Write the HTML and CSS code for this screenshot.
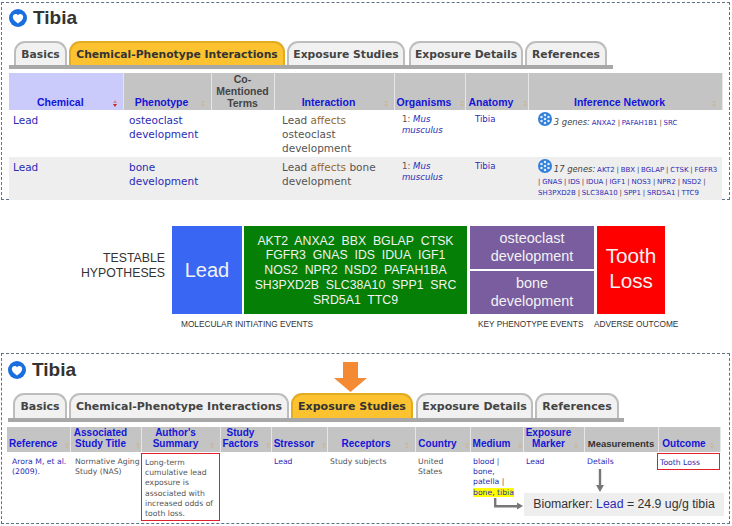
FILE: index.html
```html
<!DOCTYPE html>
<html lang="en">
<head>
    <meta charset="UTF-8">
    <title>Tibia - testable hypotheses</title>
    <link rel="stylesheet" href="styles.css">
</head>
<body>

    <!-- top panel: phenotype interactions -->
    <section class="panel panel-top">
        <h1 class="title">
            <svg class="heart" viewBox="0 0 18 18"><circle cx="9" cy="9" r="9" fill="#1a6fe0"/><path d="M9 14.6 C5.6 12.2 3.8 10.2 3.8 7.8 C3.8 5 7.4 3.8 9 6.2 C10.6 3.8 14.2 5 14.2 7.8 C14.2 10.2 12.4 12.2 9 14.6 Z" fill="#fff"/></svg>
            Tibia
        </h1>
        <div class="tabs">
            <div class="tab tab-basics">Basics</div>
            <div class="tab tab-chem on">Chemical-Phenotype Interactions</div>
            <div class="tab tab-studies">Exposure Studies</div>
            <div class="tab tab-details">Exposure Details</div>
            <div class="tab tab-refs">References</div>
        </div>
        <table class="data">
            <colgroup>
                <col style="width:114px"><col style="width:88px"><col style="width:63px"><col style="width:120px"><col style="width:71px"><col style="width:63px"><col style="width:194px">
            </colgroup>
            <tr>
                <th class="active"><a>Chemical</a><i class="sort red"></i></th>
                <th><a>Phenotype</a><i class="sort"></i></th>
                <th class="plain">Co-<br>Mentioned<br>Terms</th>
                <th><a>Interaction</a><i class="sort"></i></th>
                <th><a>Organisms</a><i class="sort tight"></i></th>
                <th><a>Anatomy</a><i class="sort tight"></i></th>
                <th><a>Inference Network</a><i class="sort"></i></th>
            </tr>
            <tr>
                <td><a>Lead</a></td>
                <td><a>osteoclast development</a></td>
                <td></td>
                <td>Lead <span class="verb">affects</span> osteoclast development</td>
                <td class="small">1: <a><em>Mus musculus</em></a></td>
                <td class="small"><a>Tibia</a></td>
                <td class="net">
                    <svg class="net-icon" viewBox="0 0 14 14"><circle cx="7" cy="7" r="7" fill="#2f7fd8"/><g fill="#dbe9fa"><circle cx="7" cy="7" r="1.3"/><circle cx="7" cy="3" r="1.3"/><circle cx="7" cy="11" r="1.3"/><circle cx="3.5" cy="5" r="1.3"/><circle cx="10.5" cy="5" r="1.3"/><circle cx="3.5" cy="9" r="1.3"/><circle cx="10.5" cy="9" r="1.3"/></g></svg>
                    <em class="count">3 genes:</em> <a>ANXA2</a> | <a>PAFAH1B1</a> | <a>SRC</a>
                </td>
            </tr>
            <tr class="alt">
                <td><a>Lead</a></td>
                <td><a>bone development</a></td>
                <td></td>
                <td>Lead <span class="verb">affects</span> bone development</td>
                <td class="small">1: <a><em>Mus musculus</em></a></td>
                <td class="small"><a>Tibia</a></td>
                <td class="net">
                    <svg class="net-icon" viewBox="0 0 14 14"><circle cx="7" cy="7" r="7" fill="#2f7fd8"/><g fill="#dbe9fa"><circle cx="7" cy="7" r="1.3"/><circle cx="7" cy="3" r="1.3"/><circle cx="7" cy="11" r="1.3"/><circle cx="3.5" cy="5" r="1.3"/><circle cx="10.5" cy="5" r="1.3"/><circle cx="3.5" cy="9" r="1.3"/><circle cx="10.5" cy="9" r="1.3"/></g></svg>
                    <em class="count">17 genes:</em> <a>AKT2</a> | <a>BBX</a> | <a>BGLAP</a> | <a>CTSK</a> | <a>FGFR3</a> | <a>GNAS</a> | <a>IDS</a> | <a>IDUA</a> | <a>IGF1</a> | <a>NOS3</a> | <a>NPR2</a> | <a>NSD2</a> | <a>SH3PXD2B</a> | <a>SLC38A10</a> | <a>SPP1</a> | <a>SRD5A1</a> | <a>TTC9</a>
                </td>
            </tr>
        </table>
    </section>

    <!-- middle diagram -->
    <section class="pathway">
        <div class="label">TESTABLE<br>HYPOTHESES</div>
        <div class="col col-lead">
            <div class="box lead">Lead</div>
            <div class="caption">MOLECULAR INITIATING EVENTS</div>
        </div>
        <div class="col col-genes">
            <div class="box genes">AKT2&nbsp; ANXA2&nbsp; BBX&nbsp; BGLAP&nbsp; CTSK<br>FGFR3&nbsp; GNAS&nbsp; IDS&nbsp; IDUA&nbsp; IGF1<br>NOS2&nbsp; NPR2&nbsp; NSD2&nbsp; PAFAH1BA<br>SH3PXD2B&nbsp; SLC38A10&nbsp; SPP1&nbsp; SRC<br>SRD5A1&nbsp; TTC9</div>
        </div>
        <div class="col col-pheno">
            <div class="pheno-stack">
                <div class="box pheno">osteoclast<br>development</div>
                <div class="box pheno">bone<br>development</div>
            </div>
            <div class="caption">KEY PHENOTYPE EVENTS</div>
        </div>
        <div class="col col-loss">
            <div class="box loss">Tooth<br>Loss</div>
            <div class="caption">ADVERSE OUTCOME</div>
        </div>
    </section>

    <!-- bottom panel: exposure studies -->
    <section class="panel panel-bottom">
        <h1 class="title">
            <svg class="heart" viewBox="0 0 18 18"><circle cx="9" cy="9" r="9" fill="#1a6fe0"/><path d="M9 14.6 C5.6 12.2 3.8 10.2 3.8 7.8 C3.8 5 7.4 3.8 9 6.2 C10.6 3.8 14.2 5 14.2 7.8 C14.2 10.2 12.4 12.2 9 14.6 Z" fill="#fff"/></svg>
            Tibia
        </h1>
        <div class="tabs">
            <div class="tab tab-basics">Basics</div>
            <div class="tab tab-chem">Chemical-Phenotype Interactions</div>
            <div class="tab tab-studies on">Exposure Studies</div>
            <div class="tab tab-details">Exposure Details</div>
            <div class="tab tab-refs">References</div>
        </div>
        <table class="data data-studies">
            <colgroup>
                <col style="width:63px"><col style="width:71px"><col style="width:79px"><col style="width:51px"><col style="width:56px"><col style="width:88px"><col style="width:55px"><col style="width:53px"><col style="width:61px"><col style="width:74px"><col style="width:62px">
            </colgroup>
            <tr>
                <th><a>Reference</a><i class="sort tight"></i></th>
                <th><a>Associated<br>Study Title</a><i class="sort tight"></i></th>
                <th><a>Author's<br>Summary</a><i class="sort"></i></th>
                <th><a>Study<br>Factors</a><i class="sort tight"></i></th>
                <th><a>Stressor</a><i class="sort tight"></i></th>
                <th><a>Receptors</a><i class="sort"></i></th>
                <th><a>Country</a><i class="sort tight"></i></th>
                <th><a>Medium</a><i class="sort tight"></i></th>
                <th><a>Exposure<br>Marker</a><i class="sort"></i></th>
                <th class="plain">Measurements</th>
                <th><a>Outcome</a><i class="sort"></i></th>
            </tr>
            <tr>
                <td class="pad-5"><a>Arora M, et al. (2009).</a></td>
                <td class="pad-5">Normative Aging Study (NAS)</td>
                <td class="flush"><div class="boxed boxed-summary">Long-term cumulative lead exposure is associated with increased odds of tooth loss.</div></td>
                <td></td>
                <td><a>Lead</a></td>
                <td>Study subjects</td>
                <td>United States</td>
                <td><a>blood</a> | <a>bone, patella</a> | <mark><a>bone, tibia</a></mark></td>
                <td><a>Lead</a></td>
                <td><a>Details</a></td>
                <td class="flush"><div class="boxed boxed-outcome"><a>Tooth Loss</a></div></td>
            </tr>
        </table>

        <svg class="orange-arrow" viewBox="0 0 33 30"><path d="M9 0H24V16H33L16.5 30L0 16H9Z" fill="#f58a35"/></svg>
        <svg class="arrow-down" viewBox="0 0 8 23"><path d="M2.8 0H5.2V16H8L4 23L0 16H2.8Z" fill="#777"/></svg>
        <svg class="arrow-right" viewBox="0 0 29 13"><path d="M0 0H2.4V7H23V4.5L29 8L23 11.5V9.4H0Z" fill="#777"/></svg>
        <div class="biomarker">Biomarker: <a>Lead</a> = 24.9 ug/g tibia</div>
    </section>

</body>
</html>
```

FILE: styles.css
```css
body {
    font-family: "Liberation Sans", Arial, sans-serif;
    background-color: #fff;
    margin: 0;
    padding: 0;
    color: #555;
}

a {
    color: #2b2bb5;
}

.panel {
    position: relative;
    box-sizing: border-box;
    width: 729px;
    margin-left: 1px;
    border: 1px dashed #5f7186;
}

.panel-top {
    height: 198px;
    margin-top: 2px;
    padding: 4px 0 0 7px;
}

.panel-bottom {
    height: 171px;
    margin-top: 14px;
    padding: 5px 0 0 5px;
}

.title {
    display: flex;
    align-items: center;
    gap: 6px;
    height: 22px;
    margin: 0;
    font-size: 19px;
    font-weight: bold;
    color: #333;
}

.heart {
    width: 18px;
    height: 18px;
}

.panel-bottom .heart {
    margin-left: 1px;
}

/* tabs */
.tabs {
    display: flex;
    gap: 2px;
    box-sizing: border-box;
    height: 28px;
    margin-top: 12px;
    padding-left: 5px;
    border-bottom: 4px solid #a8a8a8;
    font-family: "DejaVu Sans", Verdana, sans-serif;
    font-size: 10.75px;
    font-weight: bold;
}

.panel-top .tabs {
    width: 604px;
}

.panel-bottom .tabs {
    width: 616px;
    height: 29px;
    margin-left: 1px;
    font-size: 11px;
}

.tab {
    box-sizing: border-box;
    height: 24px;
    line-height: 23px;
    text-align: center;
    white-space: nowrap;
    background-color: #f1f1f1;
    border: 2px solid #bdbdbd;
    border-bottom: none;
    border-radius: 11px 11px 0 0;
    color: #444;
}

.panel-bottom .tab {
    height: 25px;
}

.tab.on {
    background-color: #fcc22f;
    border-color: #e2ab25;
    color: #333;
}

.panel-top .tab-basics { width: 53px; }
.panel-top .tab-chem { width: 216px; }
.panel-top .tab-studies { width: 118px; margin-right: 2px; }
.panel-top .tab-details { width: 114px; }
.panel-top .tab-refs { width: 82px; }

.panel-bottom .tab-basics { width: 54px; }
.panel-bottom .tab-chem { width: 220px; }
.panel-bottom .tab-studies { width: 122px; margin-right: 1px; }
.panel-bottom .tab-details { width: 117px; }
.panel-bottom .tab-refs { width: 84px; }

/* tables */
.data {
    table-layout: fixed;
    width: 713px;
    margin-top: 4px;
    border-collapse: collapse;
    font-family: "DejaVu Sans", Verdana, sans-serif;
    font-size: 10.5px;
    line-height: 14px;
}

.data th {
    position: relative;
    box-sizing: border-box;
    height: 37px;
    padding: 0 11px 2px 0;
    vertical-align: bottom;
    background-color: #c4c4c4;
    border-right: 1px solid #e6e6e6;
    font-family: "Liberation Sans", Arial, sans-serif;
    font-size: 10.5px;
    line-height: 12px;
    color: #444;
}

.data th a {
    color: #1515d8;
}

.data th.plain {
    padding: 0 0 1px;
}

.data th.active {
    background-color: #cbcbfb;
}

.data td {
    box-sizing: border-box;
    padding: 3px 3px 0;
    vertical-align: top;
    overflow-wrap: break-word;
}

.data tr:nth-child(2) td {
    height: 47px;
}

.data td:first-child {
    padding-left: 4px;
}

.panel-top .data td:nth-child(2) {
    padding-left: 6px;
}

.panel-top .data td:nth-child(4) {
    padding-left: 8px;
    padding-right: 4px;
}

.data .alt td {
    height: 40px;
    background-color: #eee;
}

.verb {
    color: #96682a;
}

.panel-top .data .small {
    padding-top: 4px;
    padding-left: 8px;
    font-size: 8.6px;
    line-height: 11px;
}

.panel-top .data .small:nth-child(6) {
    padding-left: 10px;
}

.panel-top .data .net {
    padding: 2px 2px 0 10px;
    font-size: 7px;
    line-height: 11.5px;
    word-spacing: -0.4px;
    color: #444;
}

.count {
    font-size: 8.4px;
    word-spacing: 0;
}

.net-icon {
    width: 14px;
    height: 14px;
    vertical-align: -1px;
}

.sort {
    position: absolute;
    right: 5px;
    bottom: 3px;
    width: 5px;
    height: 7px;
}

.sort::before,
.sort::after {
    content: "";
    position: absolute;
    left: 0;
    border-left: 2.5px solid transparent;
    border-right: 2.5px solid transparent;
}

.sort::before {
    top: 0;
    border-bottom: 3px solid #c9b9a0;
}

.sort::after {
    bottom: 0;
    border-top: 3px solid #c9b9a0;
}

.sort.tight {
    right: 0;
}

.sort.red::before {
    border-bottom-color: #d98a8a;
}

.sort.red::after {
    border-top-color: #c62828;
}

/* diagram */
.pathway {
    display: flex;
    align-items: flex-start;
    height: 113px;
    margin-top: 26px;
}

.label {
    box-sizing: border-box;
    width: 165px;
    margin-top: 25px;
    margin-right: 7px;
    font-size: 12.3px;
    line-height: 15px;
    text-align: right;
    color: #333;
}

.col {
    display: flex;
    flex-direction: column;
}

.col-lead { width: 70px; margin-right: 2px; }
.col-genes { width: 223px; margin-right: 3px; }
.col-pheno { width: 124px; margin-right: 3px; }
.col-loss { width: 68px; }

.box {
    display: flex;
    align-items: center;
    justify-content: center;
    box-sizing: border-box;
    text-align: center;
    color: #f2f2f2;
    height: 88px;
}

.lead {
    background-color: #3a66f4;
    font-size: 20px;
}

.genes {
    padding-top: 1px;
    background-color: #057f05;
    font-size: 12.3px;
    line-height: 14.8px;
}

.pheno-stack {
    display: flex;
    flex-direction: column;
    gap: 2px;
}

.box.pheno {
    height: 43px;
    background-color: #7a5d9f;
    font-size: 14.4px;
    line-height: 17.5px;
}

.loss {
    padding-bottom: 4px;
    background-color: #f00;
    font-size: 20.7px;
    line-height: 25px;
}

.caption {
    margin-top: 5px;
    font-size: 8.3px;
    line-height: 10px;
    white-space: nowrap;
    color: #333;
}

.col-lead .caption { margin-left: 9px; }
.col-pheno .caption { margin-left: 8px; }
.col-loss .caption { margin-left: -3px; }

/* exposure studies table */
.data-studies {
    margin-top: 5px;
    font-size: 7.7px;
    line-height: 10.2px;
}

.data-studies th {
    height: 25px;
    padding: 0 10px 3px 0;
    font-size: 10px;
    line-height: 11px;
}

.data-studies th.plain {
    padding: 0 0 3px;
    font-size: 9.5px;
    color: #333;
}

.data-studies td {
    padding: 5px 3px 0;
}

.data-studies td.pad-5 {
    padding-left: 5px;
    padding-right: 0;
}

.data-studies td.flush {
    padding: 1px 0 0;
}

.data-studies tr:nth-child(2) td {
    height: 68px;
}

.boxed {
    box-sizing: border-box;
    border: 1px solid #e0202c;
    padding: 4px 2px 0 3px;
}

.boxed-summary {
    height: 68px;
}

.boxed-outcome {
    height: 17px;
    margin-left: -1px;
    padding-left: 2px;
}

mark {
    background-color: #ff0;
}

.orange-arrow {
    position: absolute;
    left: 332px;
    top: 8px;
    width: 33px;
    height: 30px;
}

.arrow-down {
    position: absolute;
    left: 594px;
    top: 115px;
    width: 8px;
    height: 23px;
}

.arrow-right {
    position: absolute;
    left: 492px;
    top: 144px;
    width: 29px;
    height: 13px;
}

.biomarker {
    position: absolute;
    left: 522px;
    top: 139px;
    width: 200px;
    height: 23px;
    line-height: 23px;
    text-align: center;
    background-color: #eee;
    font-size: 12.3px;
    color: #333;
}
```
